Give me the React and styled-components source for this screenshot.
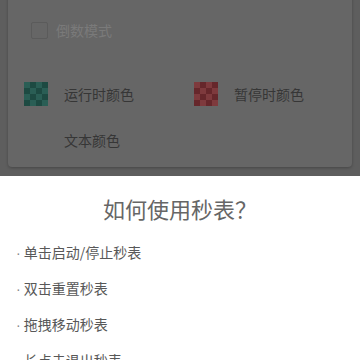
import React from "react";
import styled, { createGlobalStyle } from "styled-components";

const Global = createGlobalStyle`
  html, body { margin: 0; padding: 0; }
  body {
    width: 360px; height: 360px; overflow: hidden;
    background: #5e5e5e;
    font-family: "Noto Sans CJK SC", "Noto Sans", sans-serif;
  }
`;

const Screen = styled.div`
  width: 360px; height: 360px;
  display: flex; flex-direction: column;
  overflow: hidden;
`;

const Dimmed = styled.div`
  height: 176px;
  flex: none;
  background: #5e5e5e;
  padding: 0 8px;
  box-sizing: border-box;
`;

const Card = styled.div`
  margin-top: -12px;
  height: 179px;
  background: #666666;
  border-radius: 4px;
  box-shadow: 0 1px 3px rgba(0,0,0,0.25);
  box-sizing: border-box;
  padding: 33px 16px 0 16px;
  display: flex; flex-direction: column;
`;

const CheckRow = styled.label`
  display: flex; align-items: center; gap: 8px;
  height: 18px;
  padding-left: 7px;
`;

const Box = styled.span`
  width: 15px; height: 15px;
  border: 1.5px solid #5b5b5b;
  border-radius: 2px;
  flex: none;
`;

const Disabled = styled.span`
  font-size: 14px;
  color: #7a7a7a;
  line-height: 18px;
`;

const ColorGrid = styled.div`
  margin-top: 43px;
  display: grid;
  grid-template-columns: 170px 1fr;
  row-gap: 22px;
`;

const ColorItem = styled.div`
  display: flex; align-items: center;
  height: 24px;
`;

const Swatch = styled.span`
  width: 24px; height: 24px; flex: none;
  margin-right: 16px;
  background-color: ${p => p.$light};
  background-image: conic-gradient(${p => p.$dark} 25%, transparent 0 50%, ${p => p.$dark} 0 75%, transparent 0);
  background-size: 12px 12px;
`;

const Spacer = styled.span`
  width: 40px; flex: none;
`;

const Label = styled.span`
  font-size: 14px;
  color: #363636;
  line-height: 20px;
`;

const Sheet = styled.div`
  flex: 1;
  background: #ffffff;
  padding-top: 16px;
  box-sizing: border-box;
`;

const Title = styled.h2`
  margin: 0;
  text-align: center;
  font-weight: 400;
  font-size: 22px;
  line-height: 32px;
  color: #666666;
`;

const List = styled.ul`
  list-style: none;
  margin: 18px 0 0 0;
  padding: 0 0 0 16px;
`;

const Item = styled.li`
  font-size: 14px;
  line-height: 20px;
  color: #585858;
  margin-bottom: 15px;
  &::before {
    content: "·";
    font-family: "Liberation Sans", sans-serif;
    margin-right: 3px;
    color: #888;
  }
`;

export default function App() {
  return (
    <Screen>
      <Global />
      <Dimmed>
        <Card>
          <CheckRow>
            <Box />
            <Disabled>倒数模式</Disabled>
          </CheckRow>
          <ColorGrid>
            <ColorItem>
              <Swatch $dark="#1d4a42" $light="#2a5e55" />
              <Label>运行时颜色</Label>
            </ColorItem>
            <ColorItem>
              <Swatch $dark="#66272b" $light="#7e3a3d" />
              <Label>暂停时颜色</Label>
            </ColorItem>
            <ColorItem>
              <Spacer />
              <Label>文本颜色</Label>
            </ColorItem>
          </ColorGrid>
        </Card>
      </Dimmed>
      <Sheet>
        <Title>如何使用秒表？</Title>
        <List>
          <Item>单击启动/停止秒表</Item>
          <Item>双击重置秒表</Item>
          <Item>拖拽移动秒表</Item>
          <Item>长点击退出秒表</Item>
        </List>
      </Sheet>
    </Screen>
  );
}
